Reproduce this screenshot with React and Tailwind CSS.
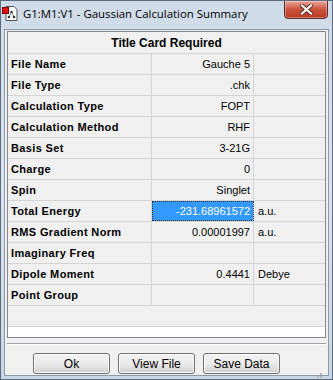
import React from "react";

const rows = [
  { label: "File Name", value: "Gauche 5", unit: "" },
  { label: "File Type", value: ".chk", unit: "" },
  { label: "Calculation Type", value: "FOPT", unit: "" },
  { label: "Calculation Method", value: "RHF", unit: "" },
  { label: "Basis Set", value: "3-21G", unit: "" },
  { label: "Charge", value: "0", unit: "" },
  { label: "Spin", value: "Singlet", unit: "" },
  { label: "Total Energy", value: "-231.68961572", unit: "a.u.", selected: true },
  { label: "RMS Gradient Norm", value: "0.00001997", unit: "a.u." },
  { label: "Imaginary Freq", value: "", unit: "" },
  { label: "Dipole Moment", value: "0.4441", unit: "Debye" },
  { label: "Point Group", value: "", unit: "" },
];

function AppIcon() {
  return (
    <svg width="17" height="17" viewBox="0 0 17 17">
      <path d="M4 1.5h8l3 3v11H4z" fill="#fff" stroke="#555" />
      <rect x="0.5" y="2.5" width="6" height="6" fill="#e01010" stroke="#700" />
      <circle cx="9.5" cy="7" r="1.3" fill="#333" />
      <circle cx="7" cy="12" r="1.3" fill="#333" />
      <circle cx="12" cy="12" r="1.3" fill="#333" />
      <path d="M9.5 7L7 12M9.5 7L12 12" stroke="#555" strokeWidth="0.8" />
    </svg>
  );
}

function Row({ row }) {
  return (
    <div className="flex h-[21px] border-b border-[#d4d4d4]">
      <div className="w-[144px] border-r border-[#d4d4d4] pl-[3px] flex items-center font-bold tracking-[0.35px]">{row.label}</div>
      <div
        className={
          row.selected
            ? "w-[102px] border-r border-[#d4d4d4] pr-[3px] flex items-center justify-end bg-[#3399ff] text-white outline-1 outline-dotted outline-[#333] -outline-offset-1"
            : "w-[102px] border-r border-[#d4d4d4] pr-[3px] flex items-center justify-end"
        }
      >
        {row.value}
      </div>
      <div className="flex-1 pl-[4px] flex items-center">{row.unit}</div>
    </div>
  );
}

function WinButton({ children }) {
  return (
    <button className="w-[77px] h-[21px] rounded-[3px] border border-[#707070] bg-gradient-to-b from-[#f2f2f2] via-[#ebebeb] to-[#cfcfcf] text-[12px] text-black shadow-[inset_0_0_0_1px_#fcfcfc]">
      {children}
    </button>
  );
}

export default function App() {
  return (
    <div
      className="w-[333px] h-[380px] bg-gradient-to-b from-[#cfdbe8] via-[#dce5ee] to-[#c9d6e3] border border-[#5d6c7e] flex flex-col overflow-hidden"
      style={{ fontFamily: '"Liberation Sans", Arial, sans-serif' }}
    >
      <div className="h-[28px] flex items-start relative shrink-0">
        <div className="pt-[4px] pl-[1px]">
          <AppIcon />
        </div>
        <div className="pl-[4px] pt-[4px] text-[11.4px] text-black" style={{ fontFamily: '"Open Sans", "Noto Sans", sans-serif' }}>
          G1:M1:V1 - Gaussian Calculation Summary
        </div>
        <div className="absolute right-[4px] -top-[1px] w-[44px] h-[19px] rounded-b-[4px] border border-[#5a2a26] bg-gradient-to-b from-[#e8a697] via-[#c9523c] to-[#b8361e] flex items-center justify-center shadow-[inset_0_0_0_1px_rgba(255,255,255,0.35)]">
          <svg width="13" height="11" viewBox="0 0 13 11">
            <path d="M2 1.5L11 9.5M11 1.5L2 9.5" stroke="#5a2a26" strokeWidth="4" strokeLinecap="square" />
            <path d="M2 1.5L11 9.5M11 1.5L2 9.5" stroke="#fff" strokeWidth="2.2" strokeLinecap="square" />
          </svg>
        </div>
      </div>

      <div className="flex-1 mx-[3px] mb-[3px] bg-[#f0f0f0] border border-[#8a9aab] flex flex-col pt-[1px] px-[2px]">
        <div className="border border-[#828790] text-[11px] text-black">
          <div className="h-[22px] border-b border-[#d4d4d4] flex items-center justify-center font-bold text-[12px]">
            Title Card Required
          </div>
          {rows.map((row) => (
            <Row key={row.label} row={row} />
          ))}
          <div className="h-[21px] border-b border-[#d4d4d4]" />
          <div className="h-[10px] bg-white" />
        </div>

        <div className="mt-[5px] border-t border-[#a0a0a0] border-b-white border-b" />

        <div className="flex gap-[8px] pl-[26px] pt-[8px] relative">
          <WinButton>Ok</WinButton>
          <WinButton>View File</WinButton>
          <WinButton>Save Data</WinButton>
          <div className="absolute right-[4px] bottom-[-7px] grid grid-cols-3 gap-[1px]">
            <span />
            <span />
            <span className="w-[2px] h-[2px] bg-[#b5b5b5]" />
            <span />
            <span className="w-[2px] h-[2px] bg-[#b5b5b5]" />
            <span className="w-[2px] h-[2px] bg-[#b5b5b5]" />
            <span className="w-[2px] h-[2px] bg-[#b5b5b5]" />
            <span className="w-[2px] h-[2px] bg-[#b5b5b5]" />
            <span className="w-[2px] h-[2px] bg-[#b5b5b5]" />
          </div>
        </div>
      </div>
    </div>
  );
}
